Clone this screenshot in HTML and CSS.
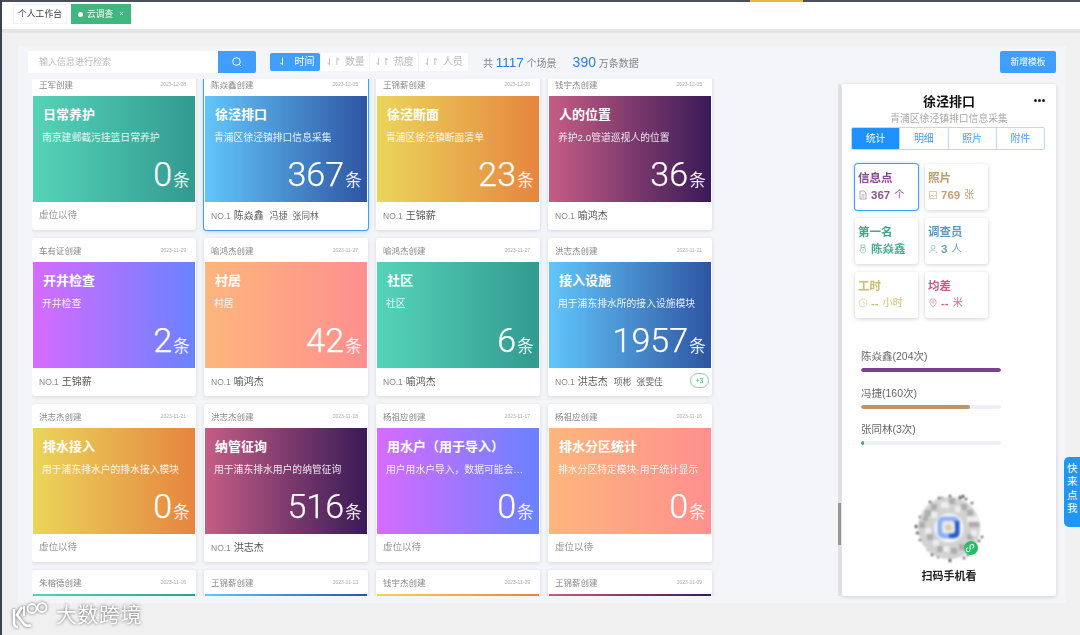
FILE: index.html
```html
<!DOCTYPE html>
<html lang="zh">
<head>
<meta charset="utf-8">
<title>云调查</title>
<link rel="stylesheet" href="styles.css">
</head>
<body>
<div class="app">
  <div class="topline"><span class="topmark"></span></div>
  <header class="tabs">
    <span class="tab">个人工作台</span>
    <span class="tab tab-on"><i class="dot"></i>云调查<em>×</em></span>
  </header>
  <div class="shade"></div>
  <main class="panel">
    <div class="toolbar">
      <div class="search">
        <span class="search-input">输入信息进行检索</span>
        <span class="search-btn"><svg width="12" height="12" viewBox="0 0 12 12" fill="none" stroke="#fff" stroke-width="1"><circle cx="5.500" cy="5.500" r="3.800"/><path d="M8.400 8.400 10 10"/></svg></span>
      </div>
      <div class="sorts">
        <span class="sort sort-on"><b>⇃</b>时间</span>
        <span class="sort"><b>⇃↾</b>数量</span>
        <span class="sort"><b>⇃↾</b>热度</span>
        <span class="sort"><b>⇃↾</b>人员</span>
      </div>
      <div class="sum">共 <strong>1117</strong> 个场景</div>
      <div class="sum sum2"><strong class="big">390</strong> 万条数据</div>
      <span class="add">新增模板</span>
    </div>
    <div class="content">
      <div class="scroller">
        <div class="grid">
          <article class="card">
            <div class="c-head"><span>王军创建</span><time>2023-12-08</time></div>
            <div class="c-body g-teal"><h3>日常养护</h3><p>南京建邺截污挂篮日常养护</p><div class="num">0<small>条</small></div></div>
            <div class="c-foot"><span class="empty">虚位以待</span></div>
          </article>
          <article class="card card-on">
            <div class="c-head"><span>陈焱鑫创建</span><time>2023-12-05</time></div>
            <div class="c-body g-blue"><h3>徐泾排口</h3><p>青浦区徐泾镇排口信息采集</p><div class="num">367<small>条</small></div></div>
            <div class="c-foot"><span class="no">NO.1</span><span class="first">陈焱鑫</span><span class="other">冯捷</span><span class="other">张同林</span></div>
          </article>
          <article class="card">
            <div class="c-head"><span>王锦薪创建</span><time>2023-12-05</time></div>
            <div class="c-body g-yellow"><h3>徐泾断面</h3><p>青浦区徐泾镇断面清单</p><div class="num">23<small>条</small></div></div>
            <div class="c-foot"><span class="no">NO.1</span><span class="first">王锦薪</span></div>
          </article>
          <article class="card">
            <div class="c-head"><span>钱宇杰创建</span><time>2023-12-05</time></div>
            <div class="c-body g-dark"><h3>人的位置</h3><p>养护2.0管道巡视人的位置</p><div class="num">36<small>条</small></div></div>
            <div class="c-foot"><span class="no">NO.1</span><span class="first">喻鸿杰</span></div>
          </article>

          <article class="card">
            <div class="c-head"><span>车有证创建</span><time>2023-11-29</time></div>
            <div class="c-body g-violet"><h3>开井检查</h3><p>开井检查</p><div class="num">2<small>条</small></div></div>
            <div class="c-foot"><span class="no">NO.1</span><span class="first">王锦薪</span></div>
          </article>
          <article class="card">
            <div class="c-head"><span>喻鸿杰创建</span><time>2023-11-27</time></div>
            <div class="c-body g-peach"><h3>村居</h3><p>村居</p><div class="num">42<small>条</small></div></div>
            <div class="c-foot"><span class="no">NO.1</span><span class="first">喻鸿杰</span></div>
          </article>
          <article class="card">
            <div class="c-head"><span>喻鸿杰创建</span><time>2023-11-27</time></div>
            <div class="c-body g-teal"><h3>社区</h3><p>社区</p><div class="num">6<small>条</small></div></div>
            <div class="c-foot"><span class="no">NO.1</span><span class="first">喻鸿杰</span></div>
          </article>
          <article class="card">
            <div class="c-head"><span>洪志杰创建</span><time>2023-11-21</time></div>
            <div class="c-body g-blue"><h3>接入设施</h3><p>用于浦东排水所的接入设施模块</p><div class="num">1957<small>条</small></div></div>
            <div class="c-foot"><span class="no">NO.1</span><span class="first">洪志杰</span><span class="other">项彬</span><span class="other">张雯佳</span><span class="more">+3</span></div>
          </article>

          <article class="card">
            <div class="c-head"><span>洪志杰创建</span><time>2023-11-21</time></div>
            <div class="c-body g-yellow"><h3>排水接入</h3><p>用于浦东排水户的排水接入模块</p><div class="num">0<small>条</small></div></div>
            <div class="c-foot"><span class="empty">虚位以待</span></div>
          </article>
          <article class="card">
            <div class="c-head"><span>洪志杰创建</span><time>2023-11-18</time></div>
            <div class="c-body g-dark"><h3>纳管征询</h3><p>用于浦东排水用户的纳管征询</p><div class="num">516<small>条</small></div></div>
            <div class="c-foot"><span class="no">NO.1</span><span class="first">洪志杰</span></div>
          </article>
          <article class="card">
            <div class="c-head"><span>杨祖应创建</span><time>2023-11-17</time></div>
            <div class="c-body g-violet"><h3>用水户（用于导入）</h3><p>用户用水户导入，数据可能会…</p><div class="num">0<small>条</small></div></div>
            <div class="c-foot"><span class="empty">虚位以待</span></div>
          </article>
          <article class="card">
            <div class="c-head"><span>杨祖应创建</span><time>2023-11-16</time></div>
            <div class="c-body g-peach"><h3>排水分区统计</h3><p>排水分区特定模块-用于统计显示</p><div class="num">0<small>条</small></div></div>
            <div class="c-foot"><span class="empty">虚位以待</span></div>
          </article>

          <article class="card">
            <div class="c-head"><span>朱榕德创建</span><time>2023-11-16</time></div>
            <div class="c-body g-teal"></div>
          </article>
          <article class="card">
            <div class="c-head"><span>王锦薪创建</span><time>2023-11-13</time></div>
            <div class="c-body g-blue"></div>
          </article>
          <article class="card">
            <div class="c-head"><span>钱宇杰创建</span><time>2023-11-09</time></div>
            <div class="c-body g-yellow"></div>
          </article>
          <article class="card">
            <div class="c-head"><span>王锦薪创建</span><time>2023-11-09</time></div>
            <div class="c-body g-dark"></div>
          </article>
        </div>
      </div>
      <div class="side">
        <div class="track"><span class="thumb"></span></div>
        <aside class="detail">
          <span class="dots"><i></i><i></i><i></i></span>
          <h2>徐泾排口</h2>
          <p class="sub">青浦区徐泾镇排口信息采集</p>
          <div class="seg"><span class="seg-on">统计</span><span>明细</span><span>照片</span><span>附件</span></div>
          <div class="stats">
            <div class="stat stat-on t-purple"><h4>信息点</h4><div class="v"><svg viewBox="0 0 10 10"><path d="M2 1h4l2 2v6H2zM3.500 5h3M3.500 7h3"/></svg><b>367</b> 个</div></div>
            <div class="stat t-tan"><h4>照片</h4><div class="v"><svg viewBox="0 0 10 10"><path d="M1.500 1.500h7v7h-7zM1.500 7 4 5l1.500 1.500L7 5l1.500 1.500"/></svg><b>769</b> 张</div></div>
            <div class="stat t-green"><h4>第一名</h4><div class="v"><svg viewBox="0 0 10 10"><path d="M3 1h4v2.500H3zM5 3.500a2.800 2.800 0 1 0 .01 0M5 5v2"/></svg><b>陈焱鑫</b></div></div>
            <div class="stat t-steel"><h4>调查员</h4><div class="v"><svg viewBox="0 0 10 10"><circle cx="5" cy="3.200" r="2"/><path d="M1.500 9c0-4 7-4 7 0"/></svg><b>3</b> 人</div></div>
            <div class="stat t-olive"><h4>工时</h4><div class="v"><svg viewBox="0 0 10 10"><circle cx="5" cy="5" r="4"/><path d="M5 2.800V5h2"/></svg><b>--</b> 小时</div></div>
            <div class="stat t-rose"><h4>均差</h4><div class="v"><svg viewBox="0 0 10 10"><path d="M5 9.200C3 7 1.800 5.600 1.800 4a3.200 3.200 0 0 1 6.400 0C8.200 5.600 7 7 5 9.200z"/><circle cx="5" cy="4" r="1.100"/></svg><b>--</b> 米</div></div>
          </div>
          <div class="bars">
            <div class="bar"><label>陈焱鑫(204次)</label><div class="rail"><span class="fill f1"></span></div></div>
            <div class="bar"><label>冯捷(160次)</label><div class="rail"><span class="fill f2"></span></div></div>
            <div class="bar"><label>张同林(3次)</label><div class="rail"><span class="fill f3"></span></div></div>
          </div>
          <div class="qr">
            <svg class="qr-img" viewBox="0 0 72 72" width="72" height="72">
              <defs><clipPath id="disc"><circle cx="36" cy="36" r="31"/></clipPath></defs>
              <path fill="#222" d="M16 9h2v2h-2zM25 5h2v3h-2zM28 5h2v2h-2zM36 3h2v2h-2zM38 6h2v2h-2zM46 4h2v3h-2zM49 3h2v3h-2zM52 6h2v2h-2zM58 10h2v2h-2zM6 24h2v2H6zM2 33h2v3H2zM3 40h3v2H3zM6 47h2v2H6zM14 57h2v2h-2zM18 61h2v3h-2zM24 63h2v3h-2zM28 61h2v2h-2zM30 63h2v3h-2zM36 67h2v3h-2zM42 64h2v2h-2zM46 61h2v3h-2zM50 65h2v2h-2zM54 62h2v2h-2zM61 52h2v2h-2zM65 48h2v2h-2zM68 44h2v2h-2z"/>
              <g clip-path="url(#disc)">
                <rect width="72" height="72" fill="#d2d2d2"/>
                <path fill="#adadad" d="M18 12h6v6h-6zM36 6h6v6h-6zM48 12h6v6h-6zM12 18h6v6h-6zM54 18h6v6h-6zM6 30h6v6H6zM56 30h12v5H56zM14 42h6v6h-6zM24 54h6v6h-6zM38 56h6v6h-6zM54 42h6v6h-6zM46 52h6v6h-6zM10 24h5v5h-5z"/>
                <path fill="#ededed" d="M28 10h8v6h-8zM42 14h6v6h-6zM18 20h6v6h-6zM12 36h6v6h-6zM54 24h6v6h-6zM20 48h6v6h-6zM30 54h6v6h-6zM58 38h6v6h-6zM60 24h6v6h-6z"/>
              </g>
              <circle cx="36" cy="36" r="14.500" fill="#f5f7fc"/>
              <rect x="24.500" y="24.500" width="22" height="22" rx="6" fill="#8fb0f0"/>
              <path fill="#2c5cc2" d="M40 29h6.500v12a5 5 0 0 1-5 5H36v-5h4z"/>
              <rect x="29" y="29" width="13" height="12.500" rx="3" fill="#e4ebf9"/>
              <circle cx="35.500" cy="35.500" r="3.200" fill="#e6c88e"/>
            </svg>
            <span class="mini"><svg viewBox="0 0 14 14" width="14" height="14"><circle cx="7" cy="7" r="7" fill="#1fc064"/><path d="M3.800 6.800a1.900 1.900 0 1 0 2.200 1.900V5.300a1.900 1.900 0 1 1 2.200 1.900" fill="none" stroke="#fff" stroke-width="1.100"/></svg></span>
          </div>
          <div class="qr-text">扫码手机看</div>
        </aside>
      </div>
    </div>
  </main>
  <div class="quick">快来点我</div>
  <div class="mark">
    <svg width="42" height="28" viewBox="0 0 42 28" fill="none" stroke="#fff" stroke-width="2.600">
      <path d="M3 8v14c0 3 2 4 4 4M11 6 6 14l7 9c2 2 5 2 7 1"/>
      <circle cx="21" cy="7.500" r="4.500" stroke-width="1.800"/>
      <circle cx="31" cy="6.500" r="4.500" stroke-width="1.800"/>
      <path d="M13 5v10" stroke-width="1.800"/>
    </svg>
    <span>大数跨境</span>
  </div>
</div>
</body>
</html>
```
FILE: styles.css
```css
* { box-sizing: border-box; }
html, body { margin: 0; padding: 0; height: 100%; overflow: hidden; }
body {
  background: #f0f0f0;
  font-family: "Liberation Sans", "Noto Sans CJK SC", sans-serif;
  color: #555;
}
.app {
  width: 1080px;
  height: 635px;
  overflow: hidden;
  border-left: 2px solid #3c4250;
  filter: blur(.45px);
}
.topline { height: 2px; background: #4a4f5c; margin-left: -2px; padding-left: 750px; display: flex; }
.topmark { width: 53px; background: #e8b54a; }
.tabs { height: 27px; background: #fff; display: flex; gap: 4px; padding: 2px 0 0 11px; }
.tab {
  height: 20px; width: 54px; font-size: 8.800px; line-height: 18px; text-align: center;
  border: 1px solid #f2f2f2; color: #444; background: #fff;
}
.tab-on { width: 60px; background: #3fb77f; border-color: #3fb77f; color: #fff; display: flex; align-items: center; padding-left: 6px; }
.dot { width: 5px; height: 5px; border-radius: 50%; background: #fff; margin-right: 4px; }
.tab-on em { font-style: normal; font-size: 7px; margin-left: 6px; opacity: .8; }
.shade { height: 4px; background: #e4e4e4; }
.panel {
  margin: 13px 14px 0 16px;
  height: 557px;
  background: #f3f5f9;
  padding: 5px 10px 0;
}
.toolbar { display: flex; align-items: center; height: 22px; }
.search { display: flex; width: 228px; height: 22px; }
.search-input { flex: 1; background: #fff; color: #bbb; font-size: 9px; line-height: 22px; padding-left: 11px; border-radius: 2px 0 0 2px; }
.search-btn { width: 38px; background: #409eff; border-radius: 0 2px 2px 0; display: flex; align-items: center; justify-content: center; }
.sorts { display: flex; margin-left: 14px; height: 18px; background: #fff; border-radius: 2px; width: 198px; }
.sort { width: 49px; font-size: 10px; line-height: 18px; color: #bbb; display: flex; justify-content: center; gap: 5px; border-left: 1px solid #f4f4f4; }
.sort b { font-weight: 400; font-size: 10px; font-family: "DejaVu Sans", sans-serif; letter-spacing: -1px; }
.sort-on { width: 50px; background: #409eff; color: #fff; border-radius: 2px; border: 0; gap: 9px; justify-content: flex-start; padding-left: 8px; }
.sum { font-size: 10px; color: #888; margin-left: 15px; white-space: nowrap; }
.sum strong { font-size: 13.500px; font-weight: 400; color: #2f7de1; }
.sum .big { font-size: 14px; }
.sum2 { margin-left: 16px; }
.add { margin-left: auto; width: 56px; height: 22px; background: #409eff; color: #fff; font-size: 8.800px; line-height: 22px; text-align: center; border-radius: 2px; }
.content { display: flex; justify-content: space-between; margin-top: 6px; height: 517px; }
.scroller { width: 690px; margin-left: 4px; overflow: hidden; height: 517px; }
.grid { display: grid; grid-template-columns: repeat(4, 164px); grid-auto-rows: 158px; gap: 8px; margin-top: -7px; }
.card { background: #fff; border-radius: 3px; box-shadow: 0 1px 4px rgba(0,0,0,.12); display: flex; flex-direction: column; position: relative; }
.card-on { box-shadow: 0 0 0 1px #409eff, 0 1px 4px rgba(64,158,255,.5); }
.c-head { height: 24px; padding: 0 10px 1px 7px; display: flex; justify-content: space-between; align-items: center; font-size: 8.500px; color: #888; }
.c-head time { font-size: 5px; color: #aaa; }
.c-body { height: 106px; margin: 0 1px; padding: 10px 6px 0 9px; color: #fff; position: relative; flex: none; }
.c-body h3 { margin: 0 0 0 1px; font-size: 13px; line-height: 18px; font-weight: 700; }
.c-body p { margin: 6.500px 0 0; font-size: 9.800px; line-height: 14px; opacity: .88; white-space: nowrap; }
.num { position: absolute; right: 5px; bottom: 4px; font-family: Roboto, "Liberation Sans", sans-serif; font-size: 34px; line-height: 38px; font-weight: 300; -webkit-text-stroke: .25px #fff; }
.num small { font-family: "Noto Sans CJK SC", sans-serif; font-weight: 400; font-size: 17px; margin-left: 1px; opacity: .9; -webkit-text-stroke: 0; }
.g-teal { background: linear-gradient(90deg, #55d4b9, #329a90); }
.g-blue { background: linear-gradient(90deg, #62c6fb, #2e55a2); }
.g-yellow { background: linear-gradient(90deg, #ebd55a, #e6853f); }
.g-dark { background: linear-gradient(90deg, #c55d85, #391a57); }
.g-violet { background: linear-gradient(90deg, #d66bff, #6a82ff); }
.g-peach { background: linear-gradient(90deg, #fdb67c, #ff8f8f); }
.c-foot { height: 28px; display: flex; align-items: baseline; padding: 5px 7px 0; position: relative; font-size: 10px; color: #666; }
.empty { color: #999; font-size: 9.500px; }
.no { font-size: 8.500px; color: #888; margin-right: 3px; }
.first { font-size: 10px; color: #555; margin-right: 6px; }
.other { font-size: 8.800px; color: #666; margin-right: 5px; }
.more { position: absolute; right: 3px; top: 5px; width: 19px; height: 15px; border: 1px solid #7fd09a; border-radius: 8px; color: #3daf62; font-size: 7px; line-height: 13px; text-align: center; }
.side { display: flex; width: 218px; gap: 1px; }
.track { width: 3px; background: #e3e5e8; height: 512px; margin-top: 5px; position: relative; }
.thumb { position: absolute; left: 0; top: 419px; width: 3px; height: 42px; background: #9a9a9a; }
.detail { width: 214px; height: 512px; margin-top: 5px; background: #fff; border-radius: 2px; box-shadow: 0 1px 4px rgba(0,0,0,.16); position: relative; padding-top: 9px; }
.dots { position: absolute; right: 11px; top: 15px; display: flex; gap: 1px; }
.dots i { width: 3px; height: 3px; border-radius: 50%; background: #222; }
.detail h2 { margin: 0; text-align: center; font-size: 13px; line-height: 18px; color: #111; }
.sub { margin: 0; text-align: center; font-size: 9.800px; line-height: 15px; color: #aaa; }
.seg { display: flex; margin: 1px 11px 0 9px; height: 23px; border: 1px solid #b9dbfb; border-radius: 2px; font-size: 10px; color: #409eff; overflow: hidden; }
.seg span { flex: 1; text-align: center; line-height: 21px; border-left: 1px solid #b9dbfb; }
.seg .seg-on { background: #1e90ff; color: #fff; border: 0; }
.stats { display: grid; grid-template-columns: 63px 63px; grid-auto-rows: 46px; gap: 8px 7px; margin: 14px 0 0 13px; }
.stat { border-radius: 3px; box-shadow: 0 1px 4px rgba(0,0,0,.18); padding: 6px 0 0 3px; background: #fff; }
.stat-on { box-shadow: 0 0 0 1px #409eff, 0 0 4px rgba(64,158,255,.6); }
.stat h4 { margin: 0; font-size: 11.500px; line-height: 16px; font-weight: 700; }
.v { display: flex; align-items: center; gap: 4px; margin-top: 1px; font-size: 10px; line-height: 16px; white-space: nowrap; opacity: .95; }
.v b { font-size: 11.500px; }
.v svg { width: 10px; height: 10px; fill: none; stroke: currentColor; stroke-width: .8; opacity: .7; flex: none; margin-right: -1px; }
.t-purple { color: #86488f; }
.t-tan { color: #c39a6e; }
.t-green { color: #45a58b; }
.t-steel { color: #5f9dbd; }
.t-olive { color: #cdbf68; }
.t-rose { color: #cf5c88; }
.bars { margin: 31px 0 0 19px; width: 140px; }
.bar { height: 36.500px; }
.bar label { display: block; font-size: 10.500px; line-height: 15px; color: #666; height: 19px; }
.rail { height: 4px; background: #eef0f6; border-radius: 2px; overflow: hidden; }
.fill { display: block; height: 4px; border-radius: 2px; }
.f1 { width: 100%; background: #7c3f92; }
.f2 { width: 78%; background: #c09466; }
.f3 { width: 2%; background: #3aa58c; }
.qr { position: relative; width: 72px; height: 72px; margin: 33px 0 0 71px; }
.qr-img { display: block; filter: blur(.8px); }
.mini { position: absolute; right: 7px; bottom: 9px; width: 14px; height: 14px; }
.mini svg { display: block; }
.qr-text { text-align: center; font-size: 11px; line-height: 16px; font-weight: 700; color: #222; margin-top: 4px; width: 214px; }
.quick { position: absolute; right: 0; top: 457px; width: 16px; height: 70px; background: #2196f3; border-radius: 5px 0 0 5px; color: #fff; font-size: 10.500px; line-height: 13.300px; padding: 5px 3px; text-align: center; }
.mark { position: absolute; left: 9px; top: 600px; display: flex; align-items: center; gap: 3px; filter: drop-shadow(0 0 1.500px rgba(0,0,0,.6)); }
.mark span { color: #fff; font-size: 21px; line-height: 30px; letter-spacing: .5px; }
```
